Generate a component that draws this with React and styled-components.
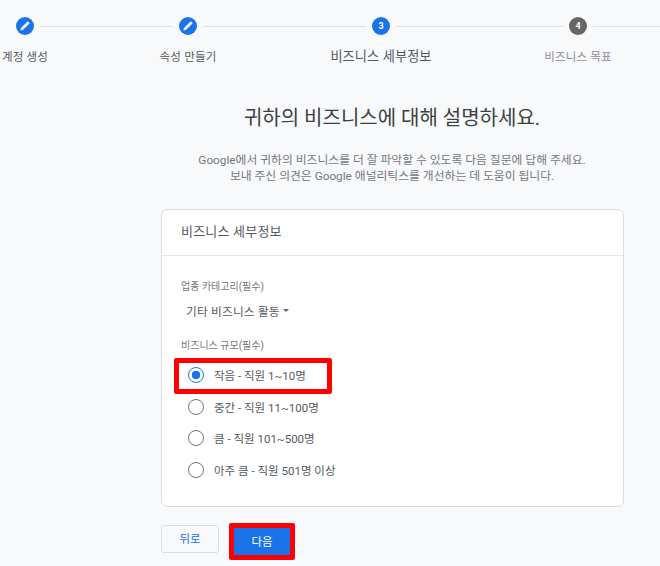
import React from 'react';
import styled, { createGlobalStyle } from 'styled-components';

const fontStack = `Roboto, "Noto Sans CJK KR", sans-serif`;

const GlobalStyle = createGlobalStyle`
  html, body {
    margin: 0;
    padding: 0;
    height: 100%;
    overflow: hidden;
    background: #f8f9fb;
  }
  body {
    font-family: ${fontStack};
  }
`;

const steps = [
  { label: '계정 생성', done: true, lineWidth: 133 },
  { label: '속성 만들기', done: true, lineWidth: 163 },
  { label: '비즈니스 세부정보', current: true, lineWidth: 167 },
  { label: '비즈니스 목표', lineWidth: 70 },
];

const options = [
  { label: '작음 - 직원 1~10명', checked: true },
  { label: '중간 - 직원 11~100명' },
  { label: '큼 - 직원 101~500명' },
  { label: '아주 큼 - 직원 501명 이상' },
];

const PencilIcon = () => (
  <svg width="12" height="12" viewBox="0 0 12 12">
    <path d="M8.8 1.2 L10.8 3.2 L3.9 10.1 L1.4 10.6 L1.9 8.1 Z" fill="#eef4fe" />
  </svg>
);

const App = () => (
  <Page>
    <GlobalStyle />
    <Track>
      {steps.map((step, i) => (
        <React.Fragment key={step.label}>
          <Circle active={step.done || step.current}>
            {step.done ? <PencilIcon /> : i + 1}
          </Circle>
          <Line style={{ width: step.lineWidth }} />
        </React.Fragment>
      ))}
    </Track>
    <Labels>
      {steps.map(step => (
        <StepLabel key={step.label} current={step.current} todo={!step.done && !step.current}>
          {step.label}
        </StepLabel>
      ))}
    </Labels>

    <Title>귀하의 비즈니스에 대해 설명하세요.</Title>
    <Intro>
      Google에서 귀하의 비즈니스를 더 잘 파악할 수 있도록 다음 질문에 답해 주세요.
      <br />
      보내 주신 의견은 Google 애널리틱스를 개선하는 데 도움이 됩니다.
    </Intro>

    <Card>
      <CardHeader>비즈니스 세부정보</CardHeader>
      <CardBody>
        <FieldLabel>업종 카테고리(필수)</FieldLabel>
        <Select>
          기타 비즈니스 활동
          <Caret />
        </Select>
        <SizeLabel>비즈니스 규모(필수)</SizeLabel>
        <Options>
          {options.map(option => (
            <Option key={option.label}>
              {option.checked && <OptionHighlight />}
              <Radio checked={option.checked} />
              {option.label}
            </Option>
          ))}
        </Options>
      </CardBody>
    </Card>

    <Actions>
      <BackButton>뒤로</BackButton>
      <NextButton>다음</NextButton>
    </Actions>
  </Page>
);

const Page = styled.div`
  width: 660px;
  height: 566px;
  overflow: hidden;
  background: #f8f9fb;
  color: #3c4043;
`;

const Track = styled.div`
  display: flex;
  align-items: center;
  gap: 6px;
  padding: 17px 0 0 16px;
  width: 800px;
`;

const Circle = styled.div`
  flex: none;
  width: 18px;
  height: 18px;
  border-radius: 50%;
  display: flex;
  align-items: center;
  justify-content: center;
  background: ${props => (props.active ? '#1a73e8' : '#666666')};
  color: #ffffff;
  font-size: 9px;
  font-weight: 700;
`;

const Line = styled.div`
  flex: none;
  height: 1px;
  background: #dfe1e5;
`;

const Labels = styled.div`
  display: grid;
  grid-template-columns: 50px 276px 110px 284px;
  margin-top: 11px;
  height: 18px;
  align-items: center;
  width: 720px;
`;

const StepLabel = styled.div`
  text-align: center;
  white-space: nowrap;
  font-size: ${props => (props.current ? '13.2px' : '11.5px')};
  letter-spacing: ${props => (props.current ? '0.1px' : '0.2px')};
  color: ${props => (props.todo ? '#8a8e93' : '#55595d')};
`;

const Title = styled.h1`
  margin: 40px 0 0 82px;
  width: 620px;
  text-align: center;
  font-size: 20px;
  line-height: 28px;
  font-weight: 400;
  color: #3c4043;
  white-space: nowrap;
`;

const Intro = styled.p`
  margin: 20px 0 0 82px;
  width: 620px;
  text-align: center;
  font-size: 11.8px;
  line-height: 16px;
  color: #74787c;
  white-space: nowrap;
`;

const Card = styled.section`
  box-sizing: border-box;
  margin: 25px 0 0 161px;
  width: 463px;
  height: 298px;
  background: #ffffff;
  border: 1px solid #dadce0;
  border-radius: 6px;
`;

const CardHeader = styled.div`
  box-sizing: border-box;
  height: 46px;
  padding: 0 19px 4px;
  display: flex;
  align-items: center;
  border-bottom: 1px solid #e3e5e8;
  font-size: 13px;
  letter-spacing: 0.2px;
  color: #55595d;
`;

const CardBody = styled.div`
  padding: 23px 0 0 19px;
`;

const FieldLabel = styled.div`
  font-size: 10px;
  line-height: 16px;
  color: #74787c;
`;

const SizeLabel = styled(FieldLabel)`
  margin-top: 20px;
`;

const Select = styled.div`
  display: flex;
  align-items: center;
  gap: 3px;
  margin: 7px 0 0 5px;
  height: 16px;
  font-size: 11.7px;
  letter-spacing: 0.2px;
  color: #55595d;
`;

const Caret = styled.span`
  width: 0;
  height: 0;
  border-left: 3px solid transparent;
  border-right: 3px solid transparent;
  border-top: 3px solid #5f6368;
`;

const Options = styled.div`
  margin: 5px 0 0 7px;
  display: flex;
  flex-direction: column;
`;

const Option = styled.div`
  position: relative;
  display: flex;
  align-items: center;
  gap: 10px;
  height: 31.7px;
  font-size: 11.5px;
  color: #55595d;
  white-space: nowrap;
`;

const OptionHighlight = styled.span`
  position: absolute;
  left: -14px;
  top: -1px;
  box-sizing: border-box;
  width: 158px;
  height: 36px;
  border: 5px solid #ff0000;
  border-radius: 2px;
`;

const Radio = styled.span`
  flex: none;
  box-sizing: border-box;
  width: 16px;
  height: 16px;
  border-radius: 50%;
  border: 1.5px solid ${props => (props.checked ? '#1a73e8' : '#6f7377')};
  background: ${props =>
    props.checked ? 'radial-gradient(circle, #1a73e8 0 4px, #ffffff 4.6px)' : '#ffffff'};
`;

const Actions = styled.div`
  display: flex;
  align-items: flex-start;
  gap: 10px;
  margin: 16px 0 0 161px;
`;

const BackButton = styled.button`
  box-sizing: border-box;
  width: 58px;
  height: 28px;
  margin-top: 2px;
  padding: 0 0 2px;
  background: #f8f9fb;
  border: 1px solid #dadce0;
  border-radius: 3px;
  color: #1a73e8;
  font-family: inherit;
  font-size: 11.5px;
`;

const NextButton = styled.button`
  box-sizing: content-box;
  width: 56px;
  height: 25px;
  padding: 0 0 2px;
  background: #1a73e8;
  border: 5px solid #ff0000;
  border-radius: 2px;
  color: #ffffff;
  font-family: inherit;
  font-size: 11.5px;
`;

export default App;
